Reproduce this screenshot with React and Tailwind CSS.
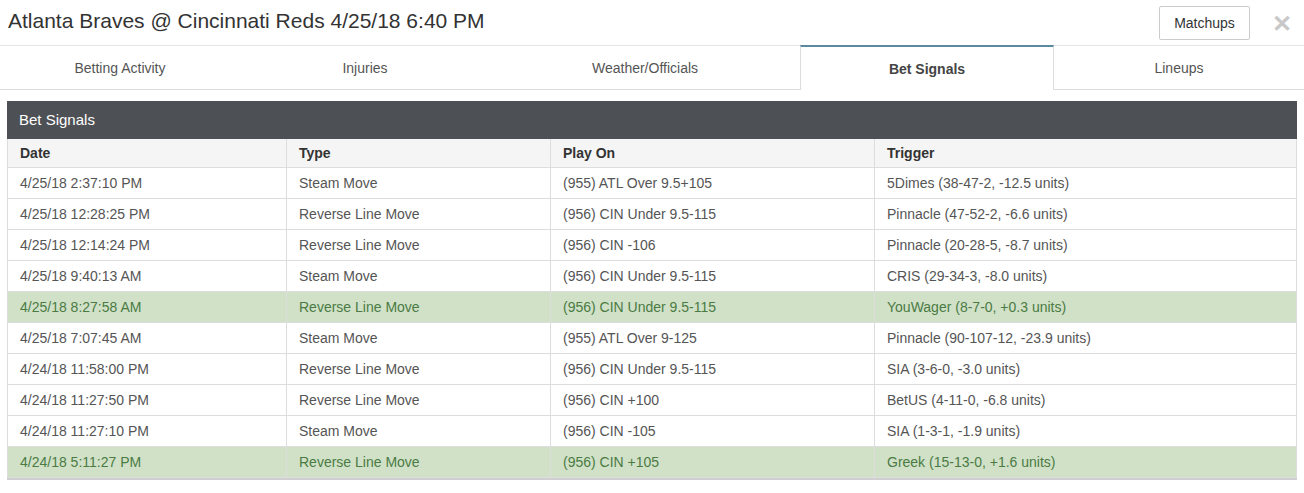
const tabs = [
  { label: "Betting Activity", w: "w-[240px]" },
  { label: "Injuries", w: "w-[250px]" },
  { label: "Weather/Officials", w: "w-[310px]" },
  { label: "Bet Signals", w: "w-[254px]", active: true },
  { label: "Lineups", w: "flex-1" },
];

const signals = [
  ["4/25/18 2:37:10 PM", "Steam Move", "(955) ATL Over 9.5+105", "5Dimes (38-47-2, -12.5 units)"],
  ["4/25/18 12:28:25 PM", "Reverse Line Move", "(956) CIN Under 9.5-115", "Pinnacle (47-52-2, -6.6 units)"],
  ["4/25/18 12:14:24 PM", "Reverse Line Move", "(956) CIN -106", "Pinnacle (20-28-5, -8.7 units)"],
  ["4/25/18 9:40:13 AM", "Steam Move", "(956) CIN Under 9.5-115", "CRIS (29-34-3, -8.0 units)"],
  ["4/25/18 8:27:58 AM", "Reverse Line Move", "(956) CIN Under 9.5-115", "YouWager (8-7-0, +0.3 units)", true],
  ["4/25/18 7:07:45 AM", "Steam Move", "(955) ATL Over 9-125", "Pinnacle (90-107-12, -23.9 units)"],
  ["4/24/18 11:58:00 PM", "Reverse Line Move", "(956) CIN Under 9.5-115", "SIA (3-6-0, -3.0 units)"],
  ["4/24/18 11:27:50 PM", "Reverse Line Move", "(956) CIN +100", "BetUS (4-11-0, -6.8 units)"],
  ["4/24/18 11:27:10 PM", "Steam Move", "(956) CIN -105", "SIA (1-3-1, -1.9 units)"],
  ["4/24/18 5:11:27 PM", "Reverse Line Move", "(956) CIN +105", "Greek (15-13-0, +1.6 units)", true],
];

const App = () => {
  return (
    <div className="w-[1304px] h-[493px] bg-white font-['Liberation_Sans',Arial,sans-serif] text-[#333] overflow-hidden">
      {/* Title bar */}
      <div className="flex items-center h-[46px] pl-[8px] pr-[12px] border-b border-[#e5e5e5]">
        <h1 className="flex-1 text-[21px] leading-none text-[#333] pb-[4px]">
          Atlanta Braves @ Cincinnati Reds 4/25/18 6:40 PM
        </h1>
        <button className="h-[34px] w-[91px] border border-[#ccc] rounded-[2px] text-[14px] text-[#333] bg-white mt-[1px] pt-[1px]">
          Matchups
        </button>
        <span className="ml-[22px] mt-[3px] text-[#c8c8c8] text-[24px] font-bold leading-none">✕</span>
      </div>

      {/* Tabs */}
      <div className="flex h-[44px]">
        {tabs.map((t) =>
          t.active ? (
            <div
              key={t.label}
              className={`${t.w} flex items-center justify-center pt-px text-[14px] font-bold text-[#444] bg-white border-t-2 border-t-[#5b8a9e] border-x border-x-[#ddd] -mt-px`}
            >
              {t.label}
            </div>
          ) : (
            <div
              key={t.label}
              className={`${t.w} flex items-center justify-center pt-px text-[14px] text-[#555] border-b border-[#ddd]`}
            >
              {t.label}
            </div>
          )
        )}
      </div>

      {/* Bet Signals panel */}
      <div className="mx-[7px] mt-[11px] border-b-2 border-[#cfcfcf]">
        <div className="h-[38px] flex items-center px-[12px] pt-px bg-[#4d5055] text-white text-[15px]">
          Bet Signals
        </div>
        <table className="w-full table-fixed border-collapse text-[14px] border-x border-[#ddd]">
          <colgroup>
            <col className="w-[279px]" />
            <col className="w-[264px]" />
            <col className="w-[324px]" />
            <col />
          </colgroup>
          <thead>
            <tr className="h-[28px] bg-[#f5f5f5] text-left">
              {["Date", "Type", "Play On", "Trigger"].map((h, i) => (
                <th
                  key={h}
                  className={`px-[12px] pt-px font-bold text-[#333] border-b border-[#ddd] ${i > 0 ? "border-l" : ""}`}
                >
                  {h}
                </th>
              ))}
            </tr>
          </thead>
          <tbody>
            {signals.map((row) => (
              <tr
                key={row[0]}
                className={`h-[31px] ${row[4] ? "bg-[#d0e1c8] text-[#4b7b43]" : "bg-white text-[#555]"}`}
              >
                {row.slice(0, 4).map((cell, i) => (
                  <td
                    key={i}
                    className={`px-[12px] pt-px border-b border-[#ddd] ${i > 0 ? "border-l" : ""}`}
                  >
                    {cell}
                  </td>
                ))}
              </tr>
            ))}
          </tbody>
        </table>
      </div>
    </div>
  );
};

export default App;
